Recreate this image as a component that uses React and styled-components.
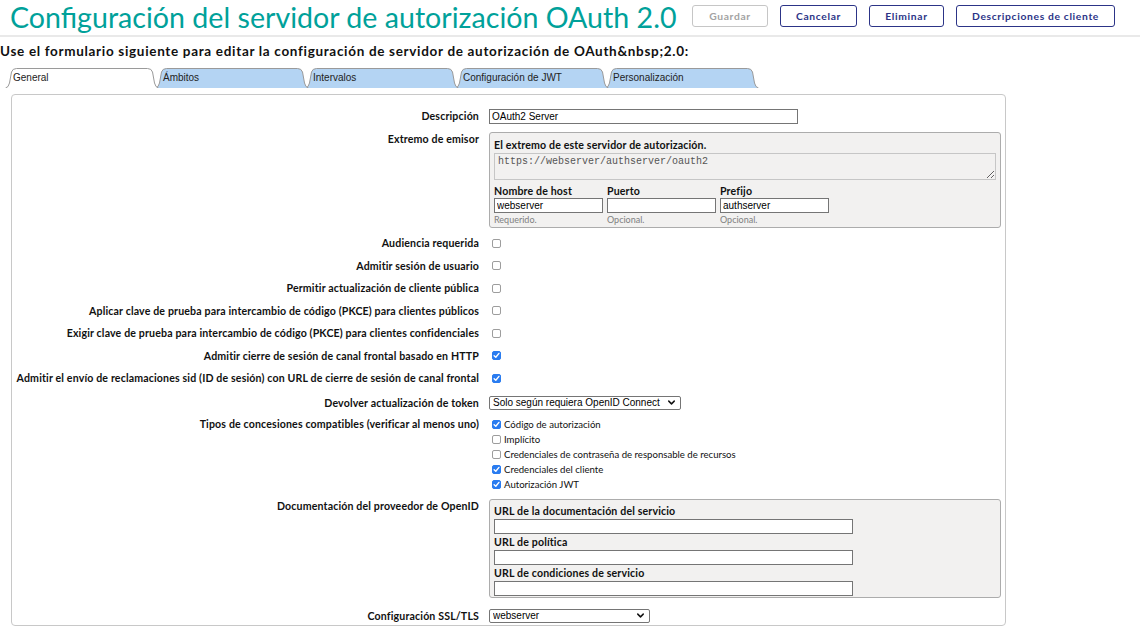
import React from 'react';
import styled, { createGlobalStyle, css } from 'styled-components';
import { ChevronDown } from 'lucide-react';

const GEO = "'Lato', 'Liberation Sans', sans-serif";
const ARIAL = "'Liberation Sans', Arial, sans-serif";
const MONO = "'Liberation Mono', 'DejaVu Sans Mono', monospace";

const GlobalStyle = createGlobalStyle`
  body {
    margin: 0;
    background: #fff;
    font-family: ${GEO};
    color: #111;
  }
  * { box-sizing: border-box; }
`;

// wide bold face used for every form caption
const boldText = css`
  font-family: ${GEO};
  font-weight: 700;
  font-size: 10.6px;
  letter-spacing: 0.15px;
`;

const tabs = ['General', 'Ámbitos', 'Intervalos', 'Configuración de JWT', 'Personalización'];

const checkRows = [
  ['Audiencia requerida', false],
  ['Admitir sesión de usuario', false],
  ['Permitir actualización de cliente pública', false],
  ['Aplicar clave de prueba para intercambio de código (PKCE) para clientes públicos', false],
  ['Exigir clave de prueba para intercambio de código (PKCE) para clientes confidenciales', false],
  ['Admitir cierre de sesión de canal frontal basado en HTTP', true],
  ['Admitir el envío de reclamaciones sid (ID de sesión) con URL de cierre de sesión de canal frontal', true],
];

const grants = [
  ['Código de autorización', true],
  ['Implícito', false],
  ['Credenciales de contraseña de responsable de recursos', false],
  ['Credenciales del cliente', true],
  ['Autorización JWT', true],
];

const docFields = [
  'URL de la documentación del servicio',
  'URL de política',
  'URL de condiciones de servicio',
];

function Check({ on }) {
  return (
    <CheckBox $on={on}>
      {on && (
        <svg width="7" height="7" viewBox="0 0 8 8">
          <path d="M1.3 4.2 L3.2 6 L6.8 1.6" fill="none" stroke="#fff" strokeWidth="1.6" strokeLinecap="round" strokeLinejoin="round" />
        </svg>
      )}
    </CheckBox>
  );
}

function Tab({ label, active, index }) {
  return (
    <TabItem $z={active ? 10 : 5 - index}>
      <TabShape width="154" height="20" viewBox="0 0 154 20">
        <path
          d="M0.5 20 Q3.5 19.5 4.5 15 L6.5 4 Q7.5 0.5 11.5 0.5 L142.5 0.5 Q146.5 0.5 147.5 4 L149.5 15 Q150.5 19.5 153.5 20"
          fill={active ? '#fff' : '#b4d4f3'}
          stroke="#9a9a9a"
          strokeWidth="1"
        />
      </TabShape>
      <TabLabel>{label}</TabLabel>
    </TabItem>
  );
}

function Select({ value, width }) {
  return (
    <SelectWrap $w={width}>
      <SelectBox defaultValue={value}>
        <option>{value}</option>
      </SelectBox>
      <SelectChevron size={11} strokeWidth={3.2} />
    </SelectWrap>
  );
}

export default function App() {
  return (
    <>
      <GlobalStyle />
      <Header>
        <Title>Configuración del servidor de autorización OAuth 2.0</Title>
        <Actions>
          <HeadButton disabled $w={76}>Guardar</HeadButton>
          <HeadButton $w={77}>Cancelar</HeadButton>
          <HeadButton $w={75}>Eliminar</HeadButton>
          <HeadButton $w={159}>Descripciones de cliente</HeadButton>
        </Actions>
      </Header>

      <Intro>Use el formulario siguiente para editar la configuración de servidor de autorización de OAuth&amp;nbsp;2.0:</Intro>

      <TabBar>
        {tabs.map((t, i) => (
          <Tab key={t} label={t} active={i === 0} index={i} />
        ))}
      </TabBar>

      <Panel>
        <Row>
          <Label>Descripción</Label>
          <Value>
            <TextInput $w={309} defaultValue="OAuth2 Server" />
          </Value>
        </Row>

        <Row>
          <Label>Extremo de emisor</Label>
          <Value>
            <GroupBox>
              <GroupTitle>El extremo de este servidor de autorización.</GroupTitle>
              <UrlArea readOnly defaultValue="https://webserver/authserver/oauth2" />
              <HostGrid>
                <Field>
                  <FieldLabel>Nombre de host</FieldLabel>
                  <TextInput $w={109} defaultValue="webserver" />
                  <Hint>Requerido.</Hint>
                </Field>
                <Field>
                  <FieldLabel>Puerto</FieldLabel>
                  <TextInput $w={109} defaultValue="" />
                  <Hint>Opcional.</Hint>
                </Field>
                <Field>
                  <FieldLabel>Prefijo</FieldLabel>
                  <TextInput $w={109} defaultValue="authserver" />
                  <Hint>Opcional.</Hint>
                </Field>
              </HostGrid>
            </GroupBox>
          </Value>
        </Row>

        {checkRows.map(([text, on]) => (
          <Row key={text}>
            <Label $lh={14.5}>{text}</Label>
            <Value $center>
              <Check on={on} />
            </Value>
          </Row>
        ))}

        <Row $pad="6px 0 3px">
          <Label $lh={14}>Devolver actualización de token</Label>
          <Value>
            <Select value="Solo según requiera OpenID Connect" width={192} />
          </Value>
        </Row>

        <Row>
          <Label>Tipos de concesiones compatibles (verificar al menos uno)</Label>
          <Value>
            <GrantList>
              {grants.map(([text, on]) => (
                <GrantItem key={text}>
                  <Check on={on} />
                  <span>{text}</span>
                </GrantItem>
              ))}
            </GrantList>
          </Value>
        </Row>

        <Row $pad="3px 0 4px">
          <Label>Documentación del proveedor de OpenID</Label>
          <Value>
            <GroupBox $pad="4px 4px 1px">
              {docFields.map((f) => (
                <DocField key={f}>
                  <FieldLabel $lh={15}>{f}</FieldLabel>
                  <TextInput $w={359} defaultValue="" />
                </DocField>
              ))}
            </GroupBox>
          </Value>
        </Row>

        <Row $pad="7px 0 0">
          <Label $lh={14}>Configuración SSL/TLS</Label>
          <Value>
            <Select value="webserver" width={161} />
          </Value>
        </Row>
      </Panel>
    </>
  );
}

const Header = styled.header`
  display: flex;
  align-items: center;
  height: 37px;
  padding: 0 25px 4px 10px;
  border-bottom: 2px solid #e9e9e9;
`;

const Title = styled.h1`
  margin: 3px 0 0;
  font-family: ${GEO};
  font-weight: 400;
  font-size: 28.6px;
  line-height: 30px;
  color: #00a19a;
  white-space: nowrap;
`;

const Actions = styled.div`
  display: flex;
  gap: 12px;
  margin-left: auto;
`;

const HeadButton = styled.button`
  width: ${(p) => p.$w}px;
  height: 22px;
  padding: 0;
  background: #fff;
  border: 1px solid ${(p) => (p.disabled ? '#c6c6c6' : '#2c3487')};
  border-radius: 3px;
  color: ${(p) => (p.disabled ? '#a3a3a3' : '#2c3487')};
  font-family: ${GEO};
  font-weight: 700;
  font-size: 10.3px;
  letter-spacing: 0.65px;
  cursor: pointer;
`;

const Intro = styled.p`
  margin: 7px 0 0;
  font-family: ${GEO};
  font-weight: 700;
  font-size: 13.5px;
  letter-spacing: 0.68px;
  line-height: 14px;
  white-space: nowrap;
`;

const TabBar = styled.div`
  display: flex;
  height: 20px;
  margin-top: 10px;
  padding-left: 5px;
`;

const TabItem = styled.div`
  position: relative;
  width: 154px;
  height: 20px;
  margin-right: -4px;
  z-index: ${(p) => p.$z};
`;

const TabShape = styled.svg`
  position: absolute;
  inset: 0;
`;

const TabLabel = styled.span`
  position: relative;
  display: block;
  padding-left: 8px;
  line-height: 19px;
  font-family: ${ARIAL};
  font-size: 10px;
  color: #222;
`;

const Panel = styled.section`
  width: 995px;
  margin: 6px 0 0 11px;
  padding: 10px 4px 2px 0;
  border: 1px solid #c8c8c8;
  border-radius: 4px;
`;

const Row = styled.div`
  display: grid;
  grid-template-columns: 467px 1fr;
  column-gap: 10px;
  align-items: start;
  padding: ${(p) => p.$pad || '4px 0'};
`;

const Label = styled.div`
  ${boldText};
  text-align: right;
  line-height: ${(p) => p.$lh || 15}px;
  white-space: nowrap;
`;

const Value = styled.div`
  display: flex;
  flex-direction: column;
  ${(p) => p.$center && 'height: 14.5px; justify-content: center; padding-left: 3px;'}
`;

const CheckBox = styled.span`
  display: inline-flex;
  align-items: center;
  justify-content: center;
  width: 9px;
  height: 9px;
  flex: none;
  border-radius: 2px;
  border: 1px solid ${(p) => (p.$on ? '#2a7cf0' : '#9d9d9d')};
  background: ${(p) => (p.$on ? '#2a7cf0' : '#fff')};
`;

const TextInput = styled.input`
  display: block;
  width: ${(p) => p.$w}px;
  height: 15px;
  margin: 0;
  padding: 0 2px;
  border: 1px solid #757575;
  border-radius: 0;
  background: #fff;
  font-family: ${ARIAL};
  font-size: 10px;
  color: #000;
  outline: none;
`;

const GroupBox = styled.div`
  width: 512px;
  padding: ${(p) => p.$pad || '5px 4px 1px'};
  background: #f2f1f0;
  border: 1px solid #acacac;
  border-radius: 3px;
`;

const GroupTitle = styled.div`
  ${boldText};
  line-height: 14px;
`;

const UrlArea = styled.textarea`
  display: block;
  width: 100%;
  height: 27px;
  margin: 1px 0 0;
  padding: 2px 3px;
  border: 1px solid #c6c6c6;
  background: #f2f1f0;
  color: #555;
  font-family: ${MONO};
  font-size: 10px;
  line-height: 12px;
  outline: none;
`;

const HostGrid = styled.div`
  display: grid;
  grid-template-columns: repeat(3, 109px);
  column-gap: 4px;
  margin-top: 4px;
`;

const Field = styled.div`
  display: flex;
  flex-direction: column;
`;

const FieldLabel = styled.div`
  ${boldText};
  line-height: ${(p) => p.$lh || 14}px;
`;

const Hint = styled.div`
  font-size: 9px;
  line-height: 13px;
  color: #808080;
`;

const DocField = styled.div`
  display: flex;
  flex-direction: column;
  & + & {
    margin-top: 1px;
  }
`;

const SelectWrap = styled.div`
  position: relative;
  width: ${(p) => p.$w}px;
  height: 14px;
`;

const SelectBox = styled.select`
  display: block;
  appearance: none;
  width: 100%;
  height: 14px;
  margin: 0;
  padding: 0 16px 0 3px;
  border: 1px solid #757575;
  border-radius: 2px;
  background: #fff;
  font-family: ${ARIAL};
  font-size: 10px;
  line-height: 12px;
  color: #000;
  outline: none;
`;

const SelectChevron = styled(ChevronDown)`
  position: absolute;
  right: 4px;
  top: 1.5px;
  color: #111;
  pointer-events: none;
`;

const GrantList = styled.div`
  display: flex;
  flex-direction: column;
  padding-left: 3px;
`;

const GrantItem = styled.label`
  display: flex;
  align-items: center;
  gap: 3px;
  height: 15px;
  font-size: 9.6px;
`;
